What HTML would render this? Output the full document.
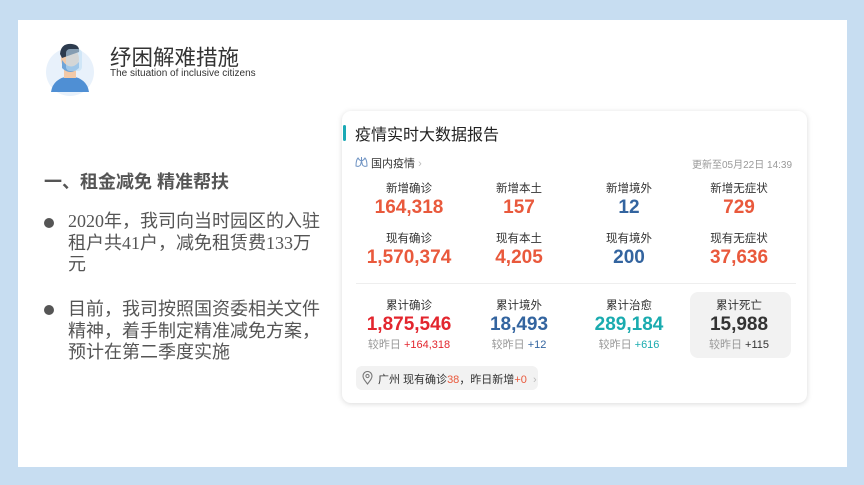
<!DOCTYPE html>
<html><head><meta charset="utf-8"><style>
*{margin:0;padding:0;box-sizing:border-box}
body{width:864px;height:485px;background:#c7ddf1;font-family:"Liberation Sans","Noto Sans CJK SC",sans-serif;position:relative;overflow:hidden}
.page{position:absolute;left:18px;top:20px;width:829px;height:447px;background:#fff}
.abs{position:absolute;white-space:nowrap}
.card{position:absolute;left:342px;top:111px;width:465px;height:292px;background:#fff;border-radius:9px;box-shadow:0 1px 6px rgba(0,0,0,.15)}
.lbl{font-size:11.5px;color:#333;text-align:center;width:110px}
.num{font-size:19px;font-weight:bold;text-align:center;width:130px;font-family:"Liberation Sans",Arial,sans-serif}
.sub{font-size:11px;color:#999;text-align:center;width:130px}
.r{color:#e9593c}.b{color:#33649f}
</style></head><body>
<div class="page"></div>
<svg class="abs" style="left:45px;top:40px" width="50" height="58" viewBox="0 0 50 58">
<circle cx="25" cy="32" r="24" fill="#e8f1fb"/>
<path d="M6 52 Q8 38 25 36 Q42 38 44 52 Z" fill="#4f8fd4"/>
<rect x="19" y="24" width="12" height="14" fill="#f2c9a8"/>
<ellipse cx="25" cy="19" rx="9" ry="11" fill="#f2c9a8"/>
<path d="M15 14 Q16 3 27 4 Q35 5 34 12 L17 18 Z" fill="#2d3b4e"/>
<path d="M17 20 Q25 32 34 22 L34 28 Q25 36 17 28Z" fill="#6fa4d8"/>
<rect x="21" y="9" width="16" height="22" rx="4" fill="#bfe0f5" opacity=".6"/>
</svg>
<div class="abs" style="left:110px;top:41px;font-size:21.5px;color:#333">纾困解难措施</div>
<div class="abs" style="left:110px;top:68px;font-size:10px;color:#333">The situation of inclusive citizens</div>
<div class="abs" style="left:44px;top:168px;font-size:18px;font-weight:bold;color:#555">一、租金减免 精准帮扶</div>
<div class="abs" style="left:44px;top:218px;width:10px;height:10px;border-radius:5px;background:#555"></div>
<div class="abs" style="left:68px;top:211px;font-size:18px;line-height:21.5px;color:#555;font-family:'Liberation Serif','Noto Sans CJK SC',serif">2020年，我司向当时园区的入驻<br>租户共41户，减免租赁费133万<br>元</div>
<div class="abs" style="left:44px;top:305px;width:10px;height:10px;border-radius:5px;background:#555"></div>
<div class="abs" style="left:68px;top:299px;font-size:18px;line-height:21.5px;color:#555">目前，我司按照国资委相关文件<br>精神，着手制定精准减免方案，<br>预计在第二季度实施</div>
<div class="card">
<div class="abs" style="left:1px;top:14px;width:3px;height:16px;background:#1aa9b5;border-radius:2px"></div>
<div class="abs" style="left:13px;top:10px;font-size:16px;color:#222">疫情实时大数据报告</div>
<svg class="abs" style="left:13px;top:45px" width="13" height="12" viewBox="0 0 13 12"><path d="M6.5 1 V5 M6.5 5 Q4 4 3 2 Q1 4 1 10 Q4 11 5.5 9 Z M6.5 5 Q9 4 10 2 Q12 4 12 10 Q9 11 7.5 9 Z" fill="none" stroke="#6f93c3" stroke-width="1"/></svg>
<div class="abs" style="left:29px;top:44px;font-size:11px;color:#333">国内疫情 <span style="color:#bbb">›</span></div>
<div class="abs" style="left:350px;top:45px;font-size:10px;color:#999">更新至05月22日 14:39</div>
<div class="abs lbl" style="left:12px;top:69px">新增确诊</div>
<div class="abs lbl" style="left:122px;top:69px">新增本土</div>
<div class="abs lbl" style="left:232px;top:69px">新增境外</div>
<div class="abs lbl" style="left:342px;top:69px">新增无症状</div>
<div class="abs num r" style="left:2px;top:86px">164,318</div>
<div class="abs num r" style="left:112px;top:86px">157</div>
<div class="abs num b" style="left:222px;top:86px">12</div>
<div class="abs num r" style="left:332px;top:86px">729</div>
<div class="abs lbl" style="left:12px;top:119px">现有确诊</div>
<div class="abs lbl" style="left:122px;top:119px">现有本土</div>
<div class="abs lbl" style="left:232px;top:119px">现有境外</div>
<div class="abs lbl" style="left:342px;top:119px">现有无症状</div>
<div class="abs num r" style="left:2px;top:136px">1,570,374</div>
<div class="abs num r" style="left:112px;top:136px">4,205</div>
<div class="abs num b" style="left:222px;top:136px">200</div>
<div class="abs num r" style="left:332px;top:136px">37,636</div>
<div class="abs" style="left:14px;top:172px;width:440px;height:1px;background:#eee"></div>
<div class="abs" style="left:348px;top:181px;width:101px;height:66px;background:#f2f2f2;border-radius:8px"></div>
<div class="abs lbl" style="left:12px;top:186px">累计确诊</div>
<div class="abs lbl" style="left:122px;top:186px">累计境外</div>
<div class="abs lbl" style="left:232px;top:186px">累计治愈</div>
<div class="abs lbl" style="left:342px;top:186px">累计死亡</div>
<div class="abs num" style="left:2px;top:203px;color:#e3262e">1,875,546</div>
<div class="abs num b" style="left:112px;top:203px">18,493</div>
<div class="abs num" style="left:222px;top:203px;color:#1aabaf">289,184</div>
<div class="abs num" style="left:332px;top:203px;color:#333">15,988</div>
<div class="abs sub" style="left:2px;top:225px">较昨日 <span style="color:#e3262e">+164,318</span></div>
<div class="abs sub" style="left:112px;top:225px">较昨日 <span class="b">+12</span></div>
<div class="abs sub" style="left:222px;top:225px">较昨日 <span style="color:#1aabaf">+616</span></div>
<div class="abs sub" style="left:332px;top:225px">较昨日 <span style="color:#333">+115</span></div>
<div class="abs" style="left:14px;top:255px;width:182px;height:24px;background:#f2f2f2;border-radius:6px"></div>
<svg class="abs" style="left:20px;top:260px" width="11" height="14" viewBox="0 0 11 14"><path d="M5.5 13 C2 8.5 1 7 1 5 A4.5 4.5 0 0 1 10 5 C10 7 9 8.5 5.5 13Z" fill="none" stroke="#777" stroke-width="1.1"/><circle cx="5.5" cy="5" r="1.6" fill="none" stroke="#777"/></svg>
<div class="abs" style="left:36px;top:260px;font-size:11px;color:#333">广州 现有确诊<span class="r">38</span>，昨日新增<span class="r">+0</span> <span style="color:#bbb">&nbsp;›</span></div>
</div>
</body></html>
